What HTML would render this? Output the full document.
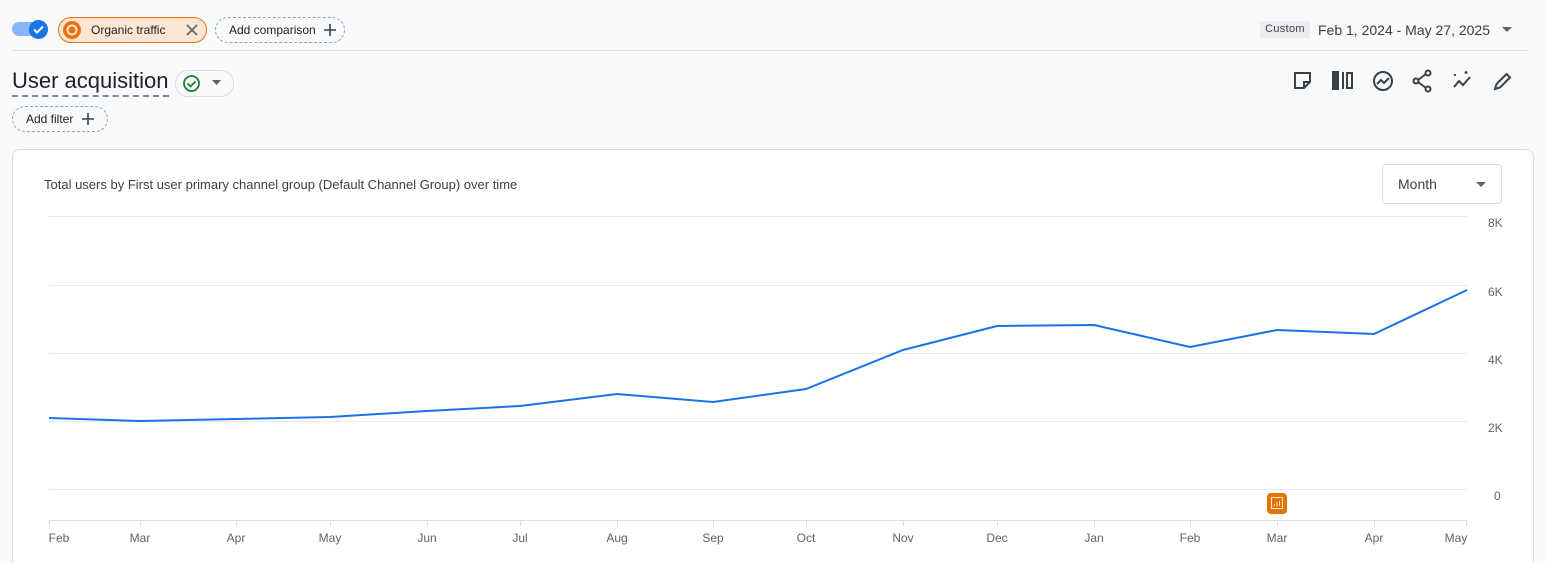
<!DOCTYPE html>
<html><head><meta charset="utf-8"><style>
html,body{margin:0;width:1546px;height:563px;overflow:hidden}
body{background:#f8f9fa;font-family:"Liberation Sans",sans-serif;position:relative;color:#202124}
.abs{position:absolute}
.chip{position:absolute;height:26px;border-radius:13px;font-size:12px;display:flex;align-items:center;box-sizing:border-box}
</style></head><body>
<div class="abs" style="left:12px;top:22px;width:30px;height:14px;border-radius:7px;background:#8ab4f8"></div>
<div class="abs" style="left:29px;top:20px;width:19px;height:19px;border-radius:50%;background:#1a73e8"></div>
<svg class="abs" style="left:31px;top:22px" width="15" height="15" viewBox="0 0 15 15"><path d="M3 7.5l3 3 6-6" stroke="#fff" stroke-width="2" fill="none"/></svg>
<div class="chip" style="left:58px;top:17px;width:149px;background:#fde5d3;border:1px solid #e8710a;padding-left:32px">Organic traffic</div>
<svg class="abs" style="left:62px;top:20px" width="20" height="20"><circle cx="10" cy="10" r="9" fill="#e8710a"/><circle cx="10" cy="10" r="4.5" fill="none" stroke="#fde5d3" stroke-width="2"/></svg>
<svg class="abs" style="left:186px;top:24px" width="12" height="12"><path d="M1 1l10 10M11 1L1 11" stroke="#5f6368" stroke-width="1.6"/></svg>
<div class="chip" style="left:215px;top:17px;width:130px;border:1px dashed #9aa0a6;padding-left:13px">Add comparison</div>
<svg class="abs" style="left:323px;top:23px" width="14" height="14"><path d="M7 1v12M1 7h12" stroke="#3c4043" stroke-width="1.6"/></svg>
<div class="abs" style="left:1260px;top:21px;width:50px;height:17px;background:#eceef1;font-size:11px;color:#3c4043;line-height:17px;text-align:center;letter-spacing:.3px">Custom</div>
<div class="abs" style="left:1318px;top:22px;font-size:14px;color:#3c4043">Feb 1, 2024 - May 27, 2025</div>
<svg class="abs" style="left:1502px;top:27px" width="10" height="6"><path d="M0 0h10L5 5z" fill="#5f6368"/></svg>
<div class="abs" style="left:12px;top:50px;width:1516px;height:1px;background:#dadce0"></div>
<div class="abs" style="left:12px;top:67px;font-size:22px;color:#202124;border-bottom:2px dashed #80868b;line-height:28px;height:28px">User acquisition</div>
<div class="chip" style="left:175px;top:70px;width:59px;height:27px;border:1px solid #dadce0;background:#f8f9fa"></div>
<svg class="abs" style="left:182px;top:74px" width="19" height="19" viewBox="0 0 19 19"><circle cx="9.5" cy="9.5" r="7.5" stroke="#188038" stroke-width="1.8" fill="none"/><path d="M5.5 9.5l3 3 5-5" stroke="#188038" stroke-width="1.8" fill="none"/></svg>
<svg class="abs" style="left:212px;top:80px" width="9" height="5"><path d="M0 0h9L4.5 5z" fill="#5f6368"/></svg>
<div class="chip" style="left:12px;top:106px;width:96px;border:1px dashed #9aa0a6;padding-left:13px">Add filter</div>
<svg class="abs" style="left:81px;top:112px" width="14" height="14"><path d="M7 1v12M1 7h12" stroke="#3c4043" stroke-width="1.6"/></svg>
<svg class="abs" style="left:1290px;top:68px" width="230" height="26" viewBox="0 0 230 26" fill="none" stroke="#3c4043" stroke-width="2">
<path d="M5 5h15v9l-6 6H5z"/><path d="M14 20v-6h6"/>
<rect x="43" y="4" width="5" height="17" fill="#3c4043"/><path d="M53 4v17"/><rect x="57" y="5" width="5" height="15"/>
<circle cx="93" cy="13" r="9"/><path d="M87 16l4-4 3 3 5-5"/>
<circle cx="138" cy="5" r="2.5"/><circle cx="138" cy="21" r="2.5"/><circle cx="126" cy="13" r="2.5"/><path d="M128 12l8-6M128 14l8 6"/>
<path d="M164 19l5-6 4 4 7-8"/><path d="M165 6v2M164 7h2M176 3v3M174.5 4.5h3" stroke-width="1.4"/>
<path d="M205 21l1.5-5 10-10 3.5 3.5-10 10z"/>
</svg>
<div class="abs" style="left:12px;top:149px;width:1520px;height:414px;background:#fff;border:1px solid #dadce0;border-bottom:none;border-radius:8px 8px 0 0"></div>
<div class="abs" style="left:44px;top:177px;font-size:13px;color:#3c4043">Total users by First user primary channel group (Default Channel Group) over time</div>
<div class="abs" style="left:1382px;top:164px;width:120px;height:40px;border:1px solid #dadce0;border-radius:4px;box-sizing:border-box;font-size:14px;padding:11px 15px;color:#3c4043">Month</div>
<svg class="abs" style="left:1476px;top:182px" width="10" height="5"><path d="M0 0h10L5 5z" fill="#5f6368"/></svg>
<svg class="abs" style="left:0;top:0" width="1546" height="563">
<g stroke="#e8eaed" stroke-width="1">
<path d="M49 216.5H1467M49 285.5H1467M49 353.5H1467M49 421.5H1467M49 489.5H1467"/>
</g>
<path d="M49 520.5H1467" stroke="#dadce0"/>
<g stroke="#dadce0"><path d="M49.5 520v6M140.5 520v6M236.5 520v6M330.5 520v6M427.5 520v6M520.5 520v6M617.5 520v6M713.5 520v6M806.5 520v6M903.5 520v6M997.5 520v6M1094.5 520v6M1190.5 520v6M1277.5 520v6M1374.5 520v6M1466.5 520v6"/></g>
<polyline fill="none" stroke="#1a73e8" stroke-width="2" points="49,418 140,421 236,419 330,417 427,411 520,406 617,394 713,402 806,389 903,350 997,326 1094,325 1190,347 1277,330 1374,334 1467,290"/>
<g font-size="12" fill="#5f6368" font-family="Liberation Sans">
<text x="1488" y="227">8K</text><text x="1488" y="296">6K</text><text x="1488" y="364">4K</text><text x="1488" y="432">2K</text><text x="1494" y="500">0</text>
<g text-anchor="middle"><text x="59" y="542">Feb</text><text x="140" y="542">Mar</text><text x="236" y="542">Apr</text><text x="330" y="542">May</text><text x="427" y="542">Jun</text><text x="520" y="542">Jul</text><text x="617" y="542">Aug</text><text x="713" y="542">Sep</text><text x="806" y="542">Oct</text><text x="903" y="542">Nov</text><text x="997" y="542">Dec</text><text x="1094" y="542">Jan</text><text x="1190" y="542">Feb</text><text x="1277" y="542">Mar</text><text x="1374" y="542">Apr</text><text x="1456" y="542">May</text></g>
</g>
<rect x="1267" y="493" width="20" height="21" rx="4" fill="#e37400"/>
<rect x="1271.5" y="497.5" width="11" height="11" fill="none" stroke="#fde5d3" stroke-width="1"/>
<path d="M1274.5 506v-2M1277 506v-4M1279.5 506v-5" stroke="#fde5d3"/>
</svg>
</body></html>
